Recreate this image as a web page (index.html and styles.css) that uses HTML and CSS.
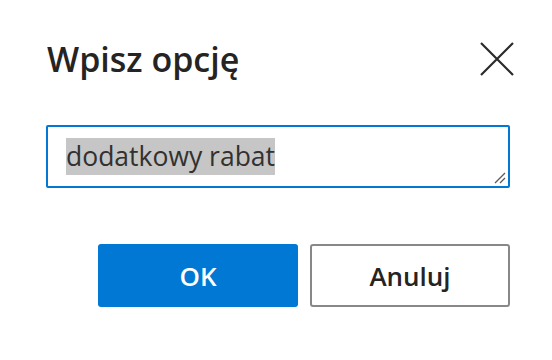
FILE: index.html
```html
<!DOCTYPE html>
<html lang="pl">
<head>
<meta charset="utf-8">
<link rel="stylesheet" href="styles.css">
</head>
<body>
<div class="dialog">
  <div class="header">
    <h1 class="title">Wpisz opcję</h1>
    <button class="close" aria-label="Zamknij">
      <svg width="34" height="34" viewBox="0 0 34 34"><path d="M1 1 L33 33 M33 1 L1 33" stroke="#2b2b2b" stroke-width="2.2" fill="none"/></svg>
    </button>
  </div>
  <div class="field">
    <span class="sel">dodatkowy rabat</span>
    <svg class="grip" width="12" height="12" viewBox="0 0 12 12"><path d="M1 11 L11 1 M6 11 L11 6" stroke="#5a5a5a" stroke-width="1.3" fill="none"/></svg>
  </div>
  <div class="actions">
    <button class="btn primary">OK</button>
    <button class="btn secondary">Anuluj</button>
  </div>
</div>
</body>
</html>
```
FILE: styles.css
```css
html, body { margin: 0; padding: 0; background: #fff; }
body { font-family: "Open Sans", "Noto Sans", sans-serif; color: #252423; width: 552px; height: 360px; overflow: hidden; }
.dialog { padding: 39px 38px 0 46px; }
.header { display: flex; justify-content: space-between; align-items: flex-start; }
.title { margin: 0; font-size: 34px; font-weight: 600; line-height: 40px; color: #252423; padding-left: 1px; }
.close { border: 0; background: none; padding: 0; margin: 3px 0 0; width: 34px; height: 34px; display: block; }
.close svg { display: block; }
.field { margin-top: 46px; width: 464px; height: 63px; box-sizing: border-box; border: 2px solid #0078d4; border-radius: 2px; position: relative; padding: 11px 0 0 18px; }
.sel { background: #c6c6c6; font-size: 26.5px; line-height: 37px; display: inline-block; color: #323130; }
.grip { position: absolute; right: 2px; bottom: 2px; }
.actions { display: flex; justify-content: flex-end; gap: 12px; margin-top: 56px; width: 464px; }
.btn { width: 200px; height: 63px; font-family: inherit; font-size: 26px; font-weight: 600; border-radius: 3px; margin: 0; padding: 0; }
.primary { background: #0078d4; color: #fff; border: 0; }
.secondary { background: #fff; color: #252423; border: 2px solid #8a8886; }
```
